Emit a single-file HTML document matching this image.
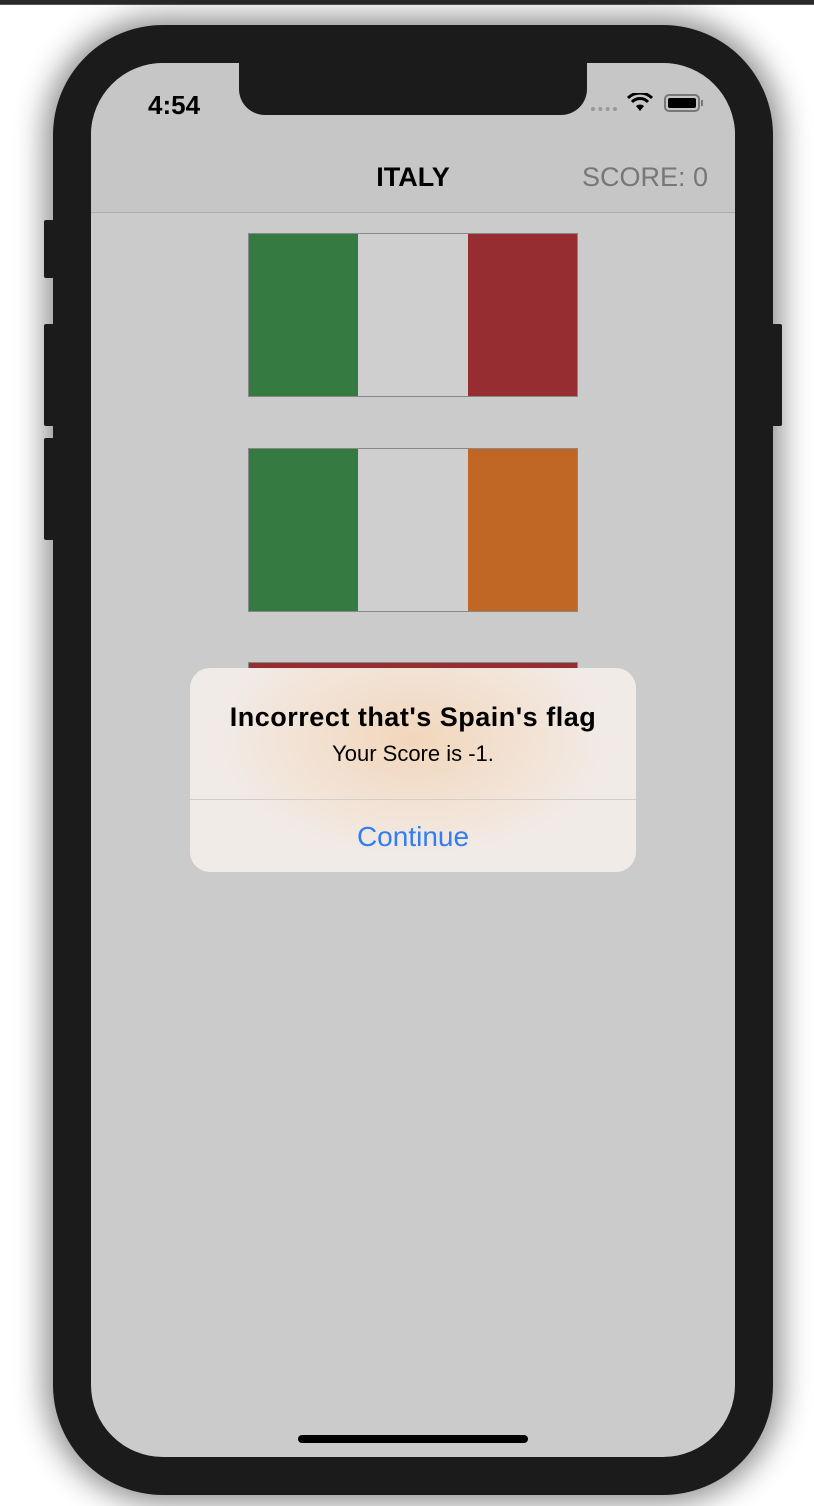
<!DOCTYPE html>
<html><head><style>
*{margin:0;padding:0;box-sizing:border-box}
body{width:814px;height:1506px;background:#fff;position:relative;overflow:hidden;font-family:"Liberation Sans",sans-serif}
.top{position:absolute;left:0;top:0;width:814px;height:5px;background:#2a2a2a;border-bottom:1px solid #555}
.phone{position:absolute;left:53px;top:25px;width:720px;height:1470px;background:#1b1b1b;border-radius:110px;box-shadow:0 0 30px 8px rgba(0,0,0,.45)}
.btn{position:absolute;background:#1b1b1b;border-radius:2px}
.screen{position:absolute;left:91px;top:63px;width:644px;height:1394px;background:#cbcbcb;border-radius:72px;overflow:hidden}
.nav{position:absolute;left:0;top:0;width:644px;height:150px;background:#c6c6c6;border-bottom:1px solid #adadad}
.notch{position:absolute;left:148px;top:0;width:348px;height:52px;background:#1b1b1b;border-radius:0 0 26px 26px}
.flag{position:absolute;left:157px;width:330px;height:164px;border:1px solid #888;display:flex}
.flag div{flex:1}
.alert{position:absolute;left:99px;top:605px;width:446px;height:204px;border-radius:20px;overflow:hidden;
background:radial-gradient(ellipse 200px 120px at 50% 35%,#f2d6bb,#f2e5da 70%,#f1ebe7)}
</style></head><body>
<div class="top"></div>
<div class="phone"></div>
<div class="btn" style="left:44px;top:220px;width:10px;height:58px"></div>
<div class="btn" style="left:44px;top:324px;width:10px;height:102px"></div>
<div class="btn" style="left:44px;top:438px;width:10px;height:102px"></div>
<div class="btn" style="left:772px;top:324px;width:10px;height:102px"></div>
<div class="screen">
 <div class="nav"></div>
 <div class="notch"></div>
 <div style="position:absolute;left:57px;top:27px;font-size:26px;font-weight:bold;color:#000">4:54</div>
 <div style="position:absolute;left:500px;top:44px;width:26px;height:4px;border-top:4px dotted #999"></div>
 <svg style="position:absolute;left:536px;top:30px" width="26" height="20" viewBox="0 0 26 20"><path d="M13 18 L9 13 A6 6 0 0 1 17 13Z" fill="#000"/><path d="M5 9 A11 11 0 0 1 21 9" stroke="#000" stroke-width="3" fill="none"/><path d="M1 5 A17 17 0 0 1 25 5" stroke="#000" stroke-width="3" fill="none"/></svg>
 <div style="position:absolute;left:573px;top:31px;width:36px;height:18px;border:2px solid #777;border-radius:5px;padding:2px"><div style="width:100%;height:100%;background:#000;border-radius:2px"></div></div>
 <div style="position:absolute;left:610px;top:37px;width:2px;height:6px;background:#777"></div>
 <div style="position:absolute;left:0;top:99px;width:644px;text-align:center;font-size:27px;font-weight:bold;color:#000">ITALY</div>
 <div style="position:absolute;right:27px;top:99px;font-size:27px;color:#777">SCORE: 0</div>
 <div class="flag" style="top:170px"><div style="background:#357a41"></div><div style="background:#cfcfcf"></div><div style="background:#952d31"></div></div>
 <div class="flag" style="top:385px"><div style="background:#357a41"></div><div style="background:#cfcfcf"></div><div style="background:#c06726"></div></div>
 <div class="flag" style="top:599px;height:20px;background:#952d31"></div>
 <div class="alert">
  <div style="position:absolute;top:34px;width:100%;text-align:center;font-size:27px;letter-spacing:0.5px;font-weight:bold;color:#000">Incorrect that's Spain's flag</div>
  <div style="position:absolute;top:73px;width:100%;text-align:center;font-size:22px;color:#000">Your Score is -1.</div>
  <div style="position:absolute;top:131px;width:100%;height:1px;background:#d8cdc6"></div>
  <div style="position:absolute;top:153px;width:100%;text-align:center;font-size:28px;color:#2f7ef5">Continue</div>
 </div>
 <div style="position:absolute;left:207px;top:1372px;width:230px;height:8px;background:#000;border-radius:4px"></div>
</div>
</body></html>
